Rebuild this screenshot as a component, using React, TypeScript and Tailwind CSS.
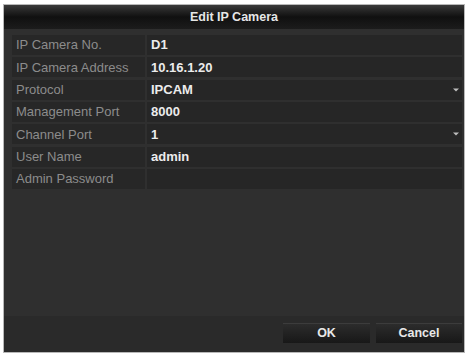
import React from "react";

const rows = [
  { label: "IP Camera No.", value: "D1" },
  { label: "IP Camera Address", value: "10.16.1.20" },
  { label: "Protocol", value: "IPCAM", select: true },
  { label: "Management Port", value: "8000" },
  { label: "Channel Port", value: "1", select: true },
  { label: "User Name", value: "admin" },
  { label: "Admin Password", value: "" },
];

const Arrow = () => (
  <svg width="6" height="4" viewBox="0 0 6 4" className="mr-[3px]">
    <path d="M0 0.5 L6 0.5 L3 3.5 Z" fill="#bdbdbd" />
  </svg>
);

const App = () => {
  return (
    <div
      className="w-[468px] h-[356px] bg-white pt-[4px] pl-[3px]"
      style={{ fontFamily: "'Liberation Sans', Arial, sans-serif" }}
    >
      <div className="w-[462px] h-[349px] border border-[#b8b8b8] bg-[#2f2f2f] flex flex-col">
        <div className="h-[24px] bg-gradient-to-b from-[#3a3a3a] via-[#101010] to-[#1c1c1c] flex items-center justify-center">
          <span className="text-[12.5px] font-bold text-[#e6e6e6]">
            Edit IP Camera
          </span>
        </div>

        <div className="flex flex-col gap-[2.33px] pt-[6px] pl-[8px] pr-[2px]">
          {rows.map((r) => (
            <div key={r.label} className="flex h-[20px] gap-[2px]">
              <div className="w-[133px] bg-[#272727] flex items-center pl-[4px] text-[13px] text-[#8c8c8c] whitespace-nowrap">
                {r.label}
              </div>
              <div className="flex-1 bg-[#262626] flex items-center justify-between pl-[4px] text-[13px] font-bold text-[#ececec]">
                <span>{r.value}</span>
                {r.select && <Arrow />}
              </div>
            </div>
          ))}
        </div>

        <div className="flex-1" />

        <div className="h-[36px] bg-[#2a2a2a] flex items-center justify-end gap-[6px] pr-[2px] pb-[2px]">
          <button className="w-[87px] h-[20px] bg-gradient-to-b from-[#2c2c2c] to-[#181818] text-[12.5px] font-bold text-[#e8e8e8] border-t border-[#3c3c3c]">
            OK
          </button>
          <button className="w-[86px] h-[20px] bg-gradient-to-b from-[#2c2c2c] to-[#181818] text-[12.5px] font-bold text-[#e8e8e8] border-t border-[#3c3c3c]">
            Cancel
          </button>
        </div>
      </div>
    </div>
  );
};

export default App;
